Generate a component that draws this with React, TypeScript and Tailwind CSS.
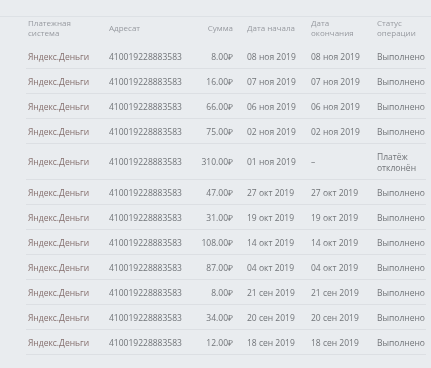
import React from "react";

const rows: [string, string, string, string][] = [
  ["8.00₽", "08 ноя 2019", "08 ноя 2019", "Выполнено"],
  ["16.00₽", "07 ноя 2019", "07 ноя 2019", "Выполнено"],
  ["66.00₽", "06 ноя 2019", "06 ноя 2019", "Выполнено"],
  ["75.00₽", "02 ноя 2019", "02 ноя 2019", "Выполнено"],
  ["310.00₽", "01 ноя 2019", "–", "Платёж отклонён"],
  ["47.00₽", "27 окт 2019", "27 окт 2019", "Выполнено"],
  ["31.00₽", "19 окт 2019", "19 окт 2019", "Выполнено"],
  ["108.00₽", "14 окт 2019", "14 окт 2019", "Выполнено"],
  ["87.00₽", "04 окт 2019", "04 окт 2019", "Выполнено"],
  ["8.00₽", "21 сен 2019", "21 сен 2019", "Выполнено"],
  ["34.00₽", "20 сен 2019", "20 сен 2019", "Выполнено"],
  ["12.00₽", "18 сен 2019", "18 сен 2019", "Выполнено"],
];

export default function App() {
  return (
    <div
      className="w-[431px] h-[368px] overflow-hidden bg-[#e9ecef] pt-[16px] blur-[0.4px]"
      style={{ fontFamily: '"Open Sans", sans-serif' }}
    >
      <div className="border-t border-[#dde1e5]">
        <div className="ml-[26px] w-[400px]">
          <div className="flex pl-[2px] pt-[1px] pb-[6px] text-[8px] leading-[10px] text-[#979aa0]">
            <div className="w-[81px]">Платежная<br />система</div>
            <div className="w-[90px] pt-[5px]">Адресат</div>
            <div className="w-[34px] text-right pt-[5px]">Сумма</div>
            <div className="w-[14px]" />
            <div className="w-[64px] pt-[5px]">Дата начала</div>
            <div className="w-[66px]">Дата<br />окончания</div>
            <div className="flex-1">Статус<br />операции</div>
          </div>
          {rows.map((r, i) => (
            <div
              key={i}
              className={`flex items-center pl-[2px] py-[6.5px] text-[8.5px] leading-[11px] text-[#717478] ${i > 0 ? "border-t border-[#dcdfe3]" : ""}`}
            >
              <div className="w-[81px] text-[#846e6c]">Яндекс.Деньги</div>
              <div className="w-[90px]">410019228883583</div>
              <div className="w-[34px] text-right whitespace-nowrap">{r[0]}</div>
              <div className="w-[14px]" />
              <div className="w-[64px]">{r[1]}</div>
              <div className="w-[66px]">{r[2]}</div>
              <div className="flex-1">
                {r[3] === "Платёж отклонён" ? (
                  <>Платёж<br />отклонён</>
                ) : (
                  r[3]
                )}
              </div>
            </div>
          ))}
          <div className="border-t border-[#dcdfe3]" />
        </div>
      </div>
    </div>
  );
}
